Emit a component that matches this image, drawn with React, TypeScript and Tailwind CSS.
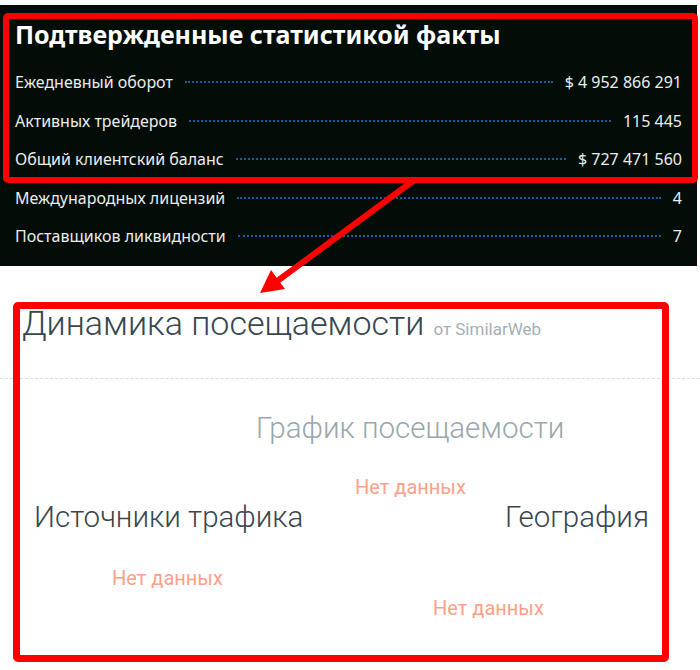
import React from "react";

const rows = [
  ["Ежедневный оборот", "$ 4 952 866 291"],
  ["Активных трейдеров", "115 445"],
  ["Общий клиентский баланс", "$ 727 471 560"],
  ["Международных лицензий", "4"],
  ["Поставщиков ликвидности", "7"],
];

export default function App() {
  return (
    <div className="relative w-[700px] h-[670px] bg-white overflow-hidden">
      <div
        className="mt-[5px] h-[261px] w-[697px] bg-[#020d07] pl-[15px] pr-[15px] pt-[13px] text-[#ececec]"
        style={{ fontFamily: '"Noto Sans", "DejaVu Sans", sans-serif' }}
      >
        <h1 className="text-[25px] leading-[32px] font-bold text-white">
          Подтвержденные статистикой факты
        </h1>
        <div className="mt-[13px] flex flex-col">
          {rows.map(([l, v]) => (
            <div key={l} className="flex h-[38.5px] items-center text-[16px]">
              <span>{l}</span>
              <span className="mx-[12px] flex-1 border-t-2 border-dotted border-[#1a5aa3]" />
              <span>{v}</span>
            </div>
          ))}
        </div>
      </div>

      <div style={{ fontFamily: 'Roboto, "Liberation Sans", sans-serif' }}>
        <div className="mt-[37px] flex items-baseline pl-[22px]">
          <h2 className="text-[34px] leading-[40px] font-light text-[#37474f]">
            Динамика посещаемости
          </h2>
          <span className="ml-[9px] text-[17px] text-[#a5b0b5]">от SimilarWeb</span>
        </div>
        <div className="mt-[35px] border-t border-dashed border-[#dcdcdc]" />
        <div className="mt-[31px] pl-[256px] text-[29.5px] leading-[36px] font-light text-[#9aa7ac]">
          График посещаемости
        </div>
        <div className="mt-[29px] pl-[355px] text-[20px] leading-[24px] text-[#ffa08a]">
          Нет данных
        </div>
        <div className="mt-[0px] flex justify-between pl-[34px] pr-[51px] text-[29.5px] leading-[36px] font-light text-[#37474f]">
          <span>Источники трафика</span>
          <span>География</span>
        </div>
        <div className="mt-[31px] pl-[112px] text-[20px] leading-[24px] text-[#ffa08a]">
          Нет данных
        </div>
        <div className="mt-[6px] pl-[433px] text-[20px] leading-[24px] text-[#ffa08a]">
          Нет данных
        </div>
      </div>

      {/* annotation overlays */}
      <div className="pointer-events-none absolute left-[3px] top-[13px] h-[170px] w-[695px] rounded-[5px] border-[6px] border-[#ff0000]" />
      <div className="pointer-events-none absolute left-[13px] top-[302px] h-[360px] w-[656px] rounded-[5px] border-[7px] border-[#ff0000]" />
      <svg className="pointer-events-none absolute left-0 top-0" width="700" height="670">
        <line x1="413" y1="181" x2="276" y2="282" stroke="#ff0000" strokeWidth="6" strokeLinecap="round" />
        <polygon points="260,293 285,289 271,270" fill="#ff0000" />
      </svg>
    </div>
  );
}
